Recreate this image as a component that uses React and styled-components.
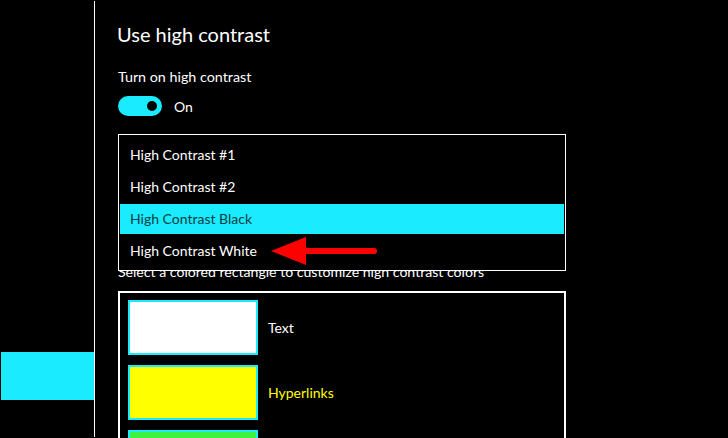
import React from 'react';
import styled, { createGlobalStyle } from 'styled-components';

const CYAN = '#1aebff';

const GlobalStyle = createGlobalStyle`
  html, body {
    margin: 0;
    background: #000;
    color: #fff;
    font-family: Lato, 'Noto Sans', sans-serif;
  }
  * {
    box-sizing: border-box;
  }
`;

const themes = ['High Contrast #1', 'High Contrast #2', 'High Contrast Black', 'High Contrast White'];

// the third row runs off the bottom of the window, so its label is not shown
const colors = [
  { name: 'Text', fill: '#ffffff', text: '#ffffff' },
  { name: 'Hyperlinks', fill: '#ffff00', text: '#ffff00' },
  { name: '', fill: '#3ff23f', text: '#3ff23f' },
];

export default function App() {
  return (
    <>
      <GlobalStyle />
      <Shell>
        <Sidebar>
          <NavItem />
        </Sidebar>
        <Main>
          <Title>Use high contrast</Title>
          <Label>Turn on high contrast</Label>
          <ToggleRow>
            <Toggle>
              <Knob />
            </Toggle>
            <span>On</span>
          </ToggleRow>
          <ThemeArea>
            <Popup>
              {themes.map((t, i) => (
                <Option key={t} selected={i === 2}>
                  {t}
                </Option>
              ))}
              <Arrow width="112" height="32" viewBox="0 0 112 32">
                <path d="M0 14 L35 0 L35 28 Z" fill="#ff0000" />
                <line x1="30" y1="14" x2="103" y2="14" stroke="#ff0000" strokeWidth="6" strokeLinecap="round" />
              </Arrow>
            </Popup>
          </ThemeArea>
          <Hint>Select a colored rectangle to customize high contrast colors</Hint>
          <ColorsPanel>
            {colors.map((c, i) => (
              <ColorRow key={i}>
                <Swatch fill={c.fill} />
                {c.name && <ColorName color={c.text}>{c.name}</ColorName>}
              </ColorRow>
            ))}
          </ColorsPanel>
        </Main>
      </Shell>
    </>
  );
}

const Shell = styled.div`
  display: flex;
  height: 438px;
  overflow: hidden;
`;

const Sidebar = styled.nav`
  width: 94px;
  flex-shrink: 0;
  margin: 1px 0 1px 1px;
  border-right: 1px solid #fff;
`;

const NavItem = styled.div`
  height: 48px;
  margin-top: 351px;
  background: ${CYAN};
`;

const Main = styled.main`
  flex: 1;
  padding: 20px 0 0 22px;
`;

const Title = styled.h1`
  margin: 0;
  font-size: 20px;
  line-height: 28px;
  font-weight: 400;
`;

const Label = styled.div`
  margin-top: 19px;
  padding-left: 1px;
  font-size: 14.3px;
  line-height: 20px;
`;

const ToggleRow = styled.div`
  margin-top: 9px;
  padding-left: 1px;
  display: flex;
  align-items: center;
  gap: 12px;
  font-size: 14px;
  height: 20px;
`;

const Toggle = styled.div`
  width: 44px;
  height: 20px;
  border-radius: 10px;
  background: ${CYAN};
  display: flex;
  align-items: center;
  justify-content: flex-end;
  padding-right: 5px;
`;

const Knob = styled.div`
  width: 10px;
  height: 10px;
  border-radius: 50%;
  background: #000;
`;

const ThemeArea = styled.div`
  position: relative;
  height: 146px;
`;

const Popup = styled.div`
  position: absolute;
  top: 18px;
  left: 1px;
  width: 448px;
  border: 1px solid #fff;
  background: #000;
  padding: 5px 1px 4px;
  display: flex;
  flex-direction: column;
  gap: 2px;
  z-index: 2;
`;

const Option = styled.div`
  height: 30px;
  display: flex;
  align-items: center;
  padding: 0 0 2px 10px;
  font-size: 14px;
  color: ${(p) => (p.selected ? '#083c42' : '#fff')};
  background: ${(p) => (p.selected ? CYAN : 'transparent')};
`;

const Arrow = styled.svg`
  position: absolute;
  left: 152px;
  top: 102px;
`;

const Hint = styled.div`
  font-size: 14.1px;
  line-height: 20px;
  padding-left: 1px;
`;

const ColorsPanel = styled.div`
  margin-top: 9px;
  margin-left: 1px;
  width: 448px;
  border: 2px solid #fff;
  padding: 7px 8px;
  display: flex;
  flex-direction: column;
  gap: 10px;
`;

const ColorRow = styled.div`
  display: flex;
  align-items: center;
  gap: 10px;
`;

const Swatch = styled.div`
  width: 130px;
  height: 55px;
  border: 2px solid ${CYAN};
  background: ${(p) => p.fill};
  flex-shrink: 0;
`;

const ColorName = styled.span`
  font-size: 14px;
  color: ${(p) => p.color};
`;
